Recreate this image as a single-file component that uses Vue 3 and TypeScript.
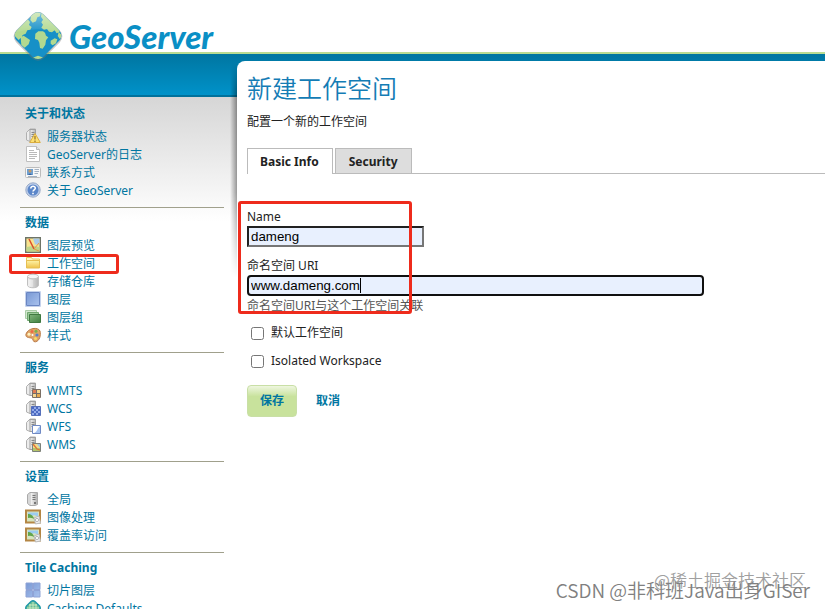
<script setup lang="ts">
import { ref } from 'vue'

interface Item { icon: string; label: string; marked?: boolean }
interface Section { title: string; items: Item[] }

const sections: Section[] = [
  {
    title: '关于和状态',
    items: [
      { icon: 'status', label: '服务器状态' },
      { icon: 'page', label: 'GeoServer的日志' },
      { icon: 'vcard', label: '联系方式' },
      { icon: 'help', label: '关于 GeoServer' },
    ],
  },
  {
    title: '数据',
    items: [
      { icon: 'preview', label: '图层预览' },
      { icon: 'folder', label: '工作空间', marked: true },
      { icon: 'database', label: '存储仓库' },
      { icon: 'layer', label: '图层' },
      { icon: 'layers', label: '图层组' },
      { icon: 'palette', label: '样式' },
    ],
  },
  {
    title: '服务',
    items: [
      { icon: 'wmts', label: 'WMTS' },
      { icon: 'wcs', label: 'WCS' },
      { icon: 'wfs', label: 'WFS' },
      { icon: 'wms', label: 'WMS' },
    ],
  },
  {
    title: '设置',
    items: [
      { icon: 'server', label: '全局' },
      { icon: 'picture', label: '图像处理' },
      { icon: 'picture', label: '覆盖率访问' },
    ],
  },
  {
    title: 'Tile Caching',
    items: [
      { icon: 'tiles', label: '切片图层' },
      { icon: 'globe', label: 'Caching Defaults' },
    ],
  },
]

const name = ref('dameng')
const uri = ref('www.dameng.com')
const isDefault = ref(false)
const isolated = ref(false)
</script>

<template>
  <svg class="sprite" aria-hidden="true">
    <defs>
      <linearGradient id="steel" x1="0" x2="1"><stop offset="0" stop-color="#f4f4f4" /><stop offset="1" stop-color="#b4b4b4" /></linearGradient>
      <linearGradient id="sky" x1="0" y1="0" x2="1" y2="1"><stop offset="0" stop-color="#7898d4" /><stop offset="1" stop-color="#a9c2ee" /></linearGradient>
      <linearGradient id="gold" x1="0" y1="0" x2="0" y2="1"><stop offset="0" stop-color="#fdf3a8" /><stop offset="1" stop-color="#efc24a" /></linearGradient>
      <linearGradient id="leaf" x1="0" y1="0" x2="1" y2="1"><stop offset="0" stop-color="#80b57c" /><stop offset="1" stop-color="#3f8040" /></linearGradient>
    </defs>
    <symbol id="i-tower" viewBox="0 0 16 16">
      <path d="M1.500 4.500 5 1h5.500v12.500H5L1.500 12z" fill="#ececec" stroke="#b0b0b0" />
      <path d="M5 1.500h5.500v12H5z" fill="url(#steel)" stroke="#a0a0a0" />
      <path d="M6.500 4.500h3M6.500 6.500h3M6.500 8.500h3" stroke="#888" />
    </symbol>
    <symbol id="i-server" viewBox="0 0 16 16">
      <path d="M2.500 3.500 5 1.500h7.500v12L10 14.500H5l-2.500-2z" fill="#d7d7d7" stroke="#aaa" />
      <path d="M6 2h6v12H6z" fill="url(#steel)" />
      <path d="M7.500 4.500h3M7.500 6.500h3M7.500 8.500h3" stroke="#777" /><path d="M9 11h2v2H9z" fill="#777" />
    </symbol>
    <symbol id="i-status" viewBox="0 0 16 16">
      <use href="#i-tower" />
      <path d="M10 5.500 15.300 14.500H4.700z" fill="#fde071" stroke="#dcae3e" stroke-linejoin="round" />
      <path d="M10 8v3.500M10 12.500V14" stroke="#8a6420" stroke-width="1.100" />
    </symbol>
    <symbol id="i-page" viewBox="0 0 16 16">
      <path d="M1.500.5h10l3 3v12h-13z" fill="#fff" stroke="#bfbfbf" /><path d="M11.500.5v3h3" fill="#e6e6e6" stroke="#b8b8b8" />
      <path d="M4 4.500h5M4 6.500h8M4 8.500h8M4 10.500h8M4 12.500h6" stroke="#b9b9b9" />
    </symbol>
    <symbol id="i-vcard" viewBox="0 0 16 16">
      <rect x=".5" y="3.500" width="15" height="10" rx="1" fill="#f7f7f7" stroke="#bcbcbc" />
      <rect x="2" y="5" width="6" height="6" fill="#6e9fd0" /><circle cx="5" cy="7" r="1.500" fill="#c99962" /><path d="M3 11q2-3 4 0z" fill="#345f9d" />
      <path d="M9.500 5.500H14M9.500 7.500H14M9.500 9.500H13M3 12.500h9" stroke="#a3b2c3" />
    </symbol>
    <symbol id="i-help" viewBox="0 0 16 16">
      <circle cx="8" cy="8" r="7.200" fill="#bccdea" stroke="#9aabc8" /><circle cx="8" cy="8" r="5.500" fill="#5b86c9" />
      <path d="M5.800 6.500C5.800 3.300 10.400 3.600 10.300 6.300 10.200 7.900 8 7.900 8 9.600M8 10.800v1.500" fill="none" stroke="#fff" stroke-width="1.600" />
    </symbol>
    <symbol id="i-preview" viewBox="0 0 16 16">
      <path d="M.7.700h14.600v14.600H.7z" fill="#f8e38e" stroke="#6d7468" stroke-width="1.400" />
      <path d="M8 1.500h6.500v6H10z" fill="#a8c9e8" /><path d="M1.500 10 8 9l6.500 1v4.500h-13z" fill="#bfd589" /><path d="m4 2 5 10" fill="none" stroke="#dc4f2c" stroke-width="1.500" /><path d="m9 12 5-6M9 12l5 2" fill="none" stroke="#e3964b" />
    </symbol>
    <symbol id="i-folder" viewBox="0 0 16 16">
      <path d="M1.500 12.500v-10h5l1 1.500h7v8.500z" fill="#fff6c9" stroke="#e8c65c" /><path d="M1.500 5.500h13v7.500h-13z" fill="url(#gold)" stroke="#e6be52" />
    </symbol>
    <symbol id="i-database" viewBox="0 0 16 16">
      <path d="M2.500 3.500v9c1 3 10 3 11 0v-9" fill="url(#steel)" stroke="#c0c0c0" /><ellipse cx="8" cy="3.500" rx="5.500" ry="2.300" fill="#f5f5f5" stroke="#c0c0c0" /><path d="M5 7v7M7 7v7" stroke="#fff" opacity=".6" />
    </symbol>
    <symbol id="i-layer" viewBox="0 0 16 16"><path d="M1.500 1.500h13v13h-13z" fill="url(#sky)" stroke="#6a86c3" /><path d="M.5.500h15v15H.5z" fill="none" stroke="#c5d2ec" /></symbol>
    <symbol id="i-layers" viewBox="0 0 16 16">
      <path d="M.5 1.500h11v8H.5z" fill="#d4e8d1" stroke="#a9cca7" /><path d="M2.500 3.500h11v8h-11z" fill="#9cc99a" stroke="#70a76f" /><path d="M4.500 5.500h11v8h-11z" fill="url(#leaf)" stroke="#3f7940" />
    </symbol>
    <symbol id="i-palette" viewBox="0 0 16 16">
      <path d="M1 7C3 1 13-.5 15 4c1 4-.2 10-4.500 10.800-3 .5-1.800-2.800-3.800-3.600C4 10.300.2 11 1 7z" fill="#e0a468" stroke="#bb7b45" />
      <circle cx="4" cy="7.300" r="1.500" fill="#fff2bd" /><circle cx="7" cy="4.500" r="1.500" fill="#ef6a44" /><circle cx="11" cy="4.200" r="1.500" fill="#79b34d" /><circle cx="12" cy="8" r="1.600" fill="#537fcc" /><circle cx="10.500" cy="11.600" r="1.500" fill="#f3dc65" /><circle cx="7.500" cy="8" r="1" fill="#fff" />
    </symbol>
    <symbol id="i-wmts" viewBox="0 0 16 16">
      <use href="#i-tower" /><path d="M7.500 7.500h8v8h-8z" fill="#f5d68f" stroke="#7b6f65" /><path d="M8 8h3v3H8z" fill="#e07a52" /><path d="M12 12h3v3h-3z" fill="#e6a94e" /><path d="M11.500 8v7M8 11.500h7" stroke="#756d69" />
    </symbol>
    <symbol id="i-wcs" viewBox="0 0 16 16">
      <use href="#i-tower" /><path d="M6.500 6.500h9v9h-9z" fill="#93abe8" stroke="#5670bb" /><path d="M7 7h2v2H7zM11 7h2v2h-2zM9 9h2v2H9zM13 9h2v2h-2zM7 11h2v2H7zM11 11h2v2h-2zM9 13h2v2H9zM13 13h2v2h-2z" fill="#4b69c2" />
    </symbol>
    <symbol id="i-wfs" viewBox="0 0 16 16"><use href="#i-tower" /><path d="M7.500 7.500h8v8h-8z" fill="#fff" stroke="#6f89c4" /><path d="M15 8v7H8.500c4-.5 3-4 6.500-7z" fill="#a6c4f2" /></symbol>
    <symbol id="i-wms" viewBox="0 0 16 16"><use href="#i-tower" /><path d="M7.500 7.500h8v8h-8z" fill="#f1dc87" stroke="#7b817b" /><path d="M12 8h3v4z" fill="#9fc0e3" /><path d="M8 12h7v3H8z" fill="#b2c56b" /><path d="m8 8 4 5 3 1" fill="none" stroke="#df7137" stroke-width="1.300" /></symbol>
    <symbol id="i-picture" viewBox="0 0 16 16">
      <path d="M1 1.500h14v12H1z" fill="#d7e4bf" stroke="#b48644" stroke-width="2" /><path d="M3 3.500h10v4L9 6 3 9z" fill="#9cccf0" /><path d="M3 5q4-1 7 6-3-3-7-2z" fill="#63a54b" /><path d="m9 9 5-2 1.500 7-5 1z" fill="#eee" stroke="#bbb" /><circle cx="12" cy="11" r="1.600" fill="#fff" stroke="#999" stroke-width=".7" />
    </symbol>
    <symbol id="i-tiles" viewBox="0 0 16 16"><path d="M1 1h6.500v6.500H1zM8.500 1H15v6.500H8.500zM1 8.500h6.500V15H1zM8.500 8.500H15V15H8.500z" fill="url(#sky)" stroke="#8fa3d6" /></symbol>
    <symbol id="i-globe" viewBox="0 0 16 16"><path d="M6 1.500Q8 0 10 1.500L14.500 6Q16 8 14.500 10L10 14.500Q8 16 6 14.500L1.500 10Q0 8 1.500 6z" fill="#68bd98" stroke="#1f98a8" stroke-width="1.400" /><path d="M8 2v12M2 8h12M4 5h8M5 4v8M11 4v8" stroke="#d8f1c5" stroke-width=".8" /></symbol>
  </svg>

  <div class="page">
    <header class="top">
      <a class="brand" href="#">
        <svg class="logo" viewBox="0 0 168 168" aria-hidden="true">
          <defs>
            <clipPath id="diamond"><rect x="28" y="27" width="112" height="112" rx="22" transform="rotate(45 84 83)" /></clipPath>
            <linearGradient id="gloss" x1="0" y1="0" x2="0" y2="1"><stop offset="0" stop-color="#fff" stop-opacity=".5" /><stop offset="1" stop-color="#fff" stop-opacity="0" /></linearGradient>
          </defs>
          <rect x="25" y="26" width="118" height="118" rx="25" transform="rotate(45 84 85)" fill="#777" opacity=".4" />
          <g clip-path="url(#diamond)">
            <path d="M0 0h168v168H0z" fill="#1690c7" />
            <path d="M30 50 52 32l8 10-3 9 8 6-4 8-9 2-5 10-9 4-4 8-8-2-14-12zM64 20l16-8 12 3-2 10-8 3-4 12-10 4-7-8zM32 88l9-5 9 6 10 7-4 13-12 10-10-8zM95 12l20 14 24 26 10 20-9 4-6-9-8 6-9-2-6-8-9 2-8-6 5-9-5-7 5-8-6-9zM76 77l9-7 14 0 6 4 3 9 7 5-7 9-2 13-8 12-8-2-2-16-4-8-9-3zM122 98l12-7 8 3-4 12-10 6-6-5zM66 150l18-7 18 6-10 14H76zM18 66l10 8 6 14-8 8-14-14zM146 72l10 10-6 12-7-10z" fill="#b2d990" />
            <path d="M0 0h168v78Q84 50 0 78z" fill="url(#gloss)" />
          </g>
        </svg>
        <span class="brand-name">GeoServer</span>
      </a>
    </header>

    <div class="body">
      <nav class="side">
        <section v-for="section in sections" :key="section.title" class="group">
          <h2>{{ section.title }}</h2>
          <ul>
            <li v-for="item in section.items" :key="item.label" :class="{ marked: item.marked }">
              <a href="#"><svg class="icon" aria-hidden="true"><use :href="'#i-' + item.icon" /></svg>{{ item.label }}</a>
            </li>
          </ul>
        </section>
      </nav>

      <main class="panel">
        <h1>新建工作空间</h1>
        <p class="intro">配置一个新的工作空间</p>
        <div class="tabs" role="tablist">
          <button class="tab active" type="button" role="tab" aria-selected="true">Basic Info</button>
          <button class="tab" type="button" role="tab" aria-selected="false">Security</button>
        </div>

        <form @submit.prevent>
          <div class="fields">
            <label for="ws-name">Name</label>
            <input id="ws-name" v-model="name" class="text short" type="text" />
            <label for="ws-uri">命名空间 URI</label>
            <div class="entry">
              <input id="ws-uri" v-model="uri" class="text current" type="text" />
              <i class="caret"></i>
            </div>
            <p class="hint">命名空间URI与这个工作空间关联</p>
          </div>
          <label class="check"><input v-model="isDefault" type="checkbox" />默认工作空间</label>
          <label class="check"><input v-model="isolated" type="checkbox" />Isolated Workspace</label>
          <div class="actions">
            <button class="save" type="submit">保存</button>
            <a class="cancel" href="#">取消</a>
          </div>
        </form>
      </main>
    </div>
    <div class="credit community">@稀土掘金技术社区</div>
    <div class="credit author">CSDN @非科班Java出身GISer</div>
  </div>
</template>

<style>
body {
  margin: 0;
  background: #fff;
}
</style>

<style scoped>
*,
*::before,
*::after {
  box-sizing: border-box;
}
.sprite {
  position: absolute;
  width: 0;
  height: 0;
}
.page {
  position: relative;
  display: flex;
  flex-direction: column;
  height: 100vh;
  overflow: hidden;
  font: 12px/18px "Noto Sans", "Noto Sans CJK SC", sans-serif;
  color: #222;
}
h1, h2, p, ul {
  margin: 0;
  padding: 0;
}
a {
  color: #0076a1;
  text-decoration: none;
}
.top {
  height: 52px;
  flex: none;
  padding: 8px 10px 0;
  position: relative;
  z-index: 1;
}
.brand {
  display: flex;
  gap: 3px;
  color: #0a8fc5;
}
.logo {
  width: 56px;
  height: 56px;
  flex: none;
}
.brand-name {
  font: italic 900 33px/56px Lato, sans-serif;
}
.body {
  flex: 1;
  display: flex;
  align-items: stretch;
  gap: 13px;
  padding: 7px 0 0 20px;
  border-top: 2px solid #b9dc92;
  background:
    linear-gradient(#0076a1, #0092c9 95%, #00719b 95%) 0 0 / 100% 43px no-repeat,
    linear-gradient(#d6d6d6, #fff) 0 43px / 100% 125px no-repeat;
}
.side {
  flex: 0 0 204px;
  padding-top: 37px;
}
.group {
  padding: 6px 5px 7px;
  border-bottom: 1px solid #a0a08c;
}
.group:first-child {
  padding-top: 7px;
}
.group h2 {
  margin-bottom: 5px;
  font-size: 12px;
  line-height: 18px;
  color: #0076a1;
}
.group ul {
  list-style: none;
}
.group li {
  position: relative;
  height: 18px;
}
.group li a {
  display: flex;
  gap: 6px;
}
.icon {
  width: 16px;
  height: 16px;
  flex: none;
}
.marked::after {
  content: "";
  position: absolute;
  inset: -1px auto auto -16px;
  width: 110px;
  height: 20px;
  border: 3px solid #ee2b1c;
  border-radius: 3px;
}
.panel {
  position: relative;
  flex: 1;
  min-width: 0;
  padding: 9px 0 0 10px;
  background: #fff;
  border-top-left-radius: 8px;
}
.panel::before {
  content: "";
  position: absolute;
  top: 2px;
  left: -7px;
  width: 7px;
  height: 215px;
  background: linear-gradient(to right, transparent, rgba(0, 0, 0, 0.38));
  mask-image: linear-gradient(transparent, #000 30px, #000 60%, transparent);
}
h1 {
  font-size: 25px;
  font-weight: 350;
  line-height: 36px;
  color: #147cb5;
}
.intro {
  margin-top: 7px;
}
.tabs {
  display: flex;
  gap: 2px;
  margin-top: 17px;
  border-bottom: 1px solid #bbb;
}
.tab {
  height: 25px;
  padding: 1px 13px 0;
  border: 1px solid #bbb;
  border-bottom: 0;
  background: #ddd;
  color: #222;
  font: bold 12px/18px "Noto Sans", sans-serif;
}
.tab.active {
  margin-bottom: -1px;
  height: 26px;
  padding: 0 13px 0 12px;
  background: #fff;
}
.fields {
  position: relative;
  display: flex;
  flex-direction: column;
  align-items: flex-start;
  margin-top: 34px;
}
.fields::after {
  content: "";
  position: absolute;
  inset: -7px auto auto -9px;
  width: 174px;
  height: 113px;
  border: 3px solid #ee2b1c;
  border-radius: 3px;
}
.text {
  height: 21px;
  padding: 0 2px;
  border: 2px inset #767676;
  background: #e8f0fe;
  color: #000;
  font-family: "Liberation Sans", sans-serif;
}
.short {
  width: 177px;
  margin-bottom: 10px;
}
.entry {
  position: relative;
  width: 457px;
  max-width: 100%;
}
.current {
  display: block;
  width: 100%;
  border: 2px solid #101010;
  border-radius: 4px;
}
.caret {
  position: absolute;
  top: 3px;
  left: 113px;
  width: 1px;
  height: 15px;
  background: #000;
}
.hint {
  margin-top: 1px;
  color: #555;
}
.check {
  display: flex;
  align-items: center;
  gap: 7px;
  height: 28px;
  padding-left: 4px;
}
.fields + .check {
  margin-top: 4px;
}
.check input {
  margin: 0;
}
.actions {
  display: flex;
  align-items: center;
  gap: 19px;
  margin-top: 10px;
  font-weight: bold;
}
.save {
  width: 50px;
  height: 32px;
  padding: 0;
  border: 1px solid #c9dfa6;
  border-radius: 4px;
  background: linear-gradient(#eef6df, #c8e29c 35%);
  color: #0076a1;
  font: bold 12px/18px "Noto Sans", "Noto Sans CJK SC", sans-serif;
}
.credit {
  position: absolute;
  font-family: "Noto Sans CJK SC", sans-serif;
  font-weight: 350;
  white-space: nowrap;
  pointer-events: none;
}
.community {
  right: 19px;
  bottom: 17px;
  font-size: 17px;
  line-height: 24px;
  color: #a0a0a0;
}
.author {
  right: 15px;
  bottom: 5px;
  font-size: 19px;
  line-height: 28px;
  color: #808080;
}
</style>
